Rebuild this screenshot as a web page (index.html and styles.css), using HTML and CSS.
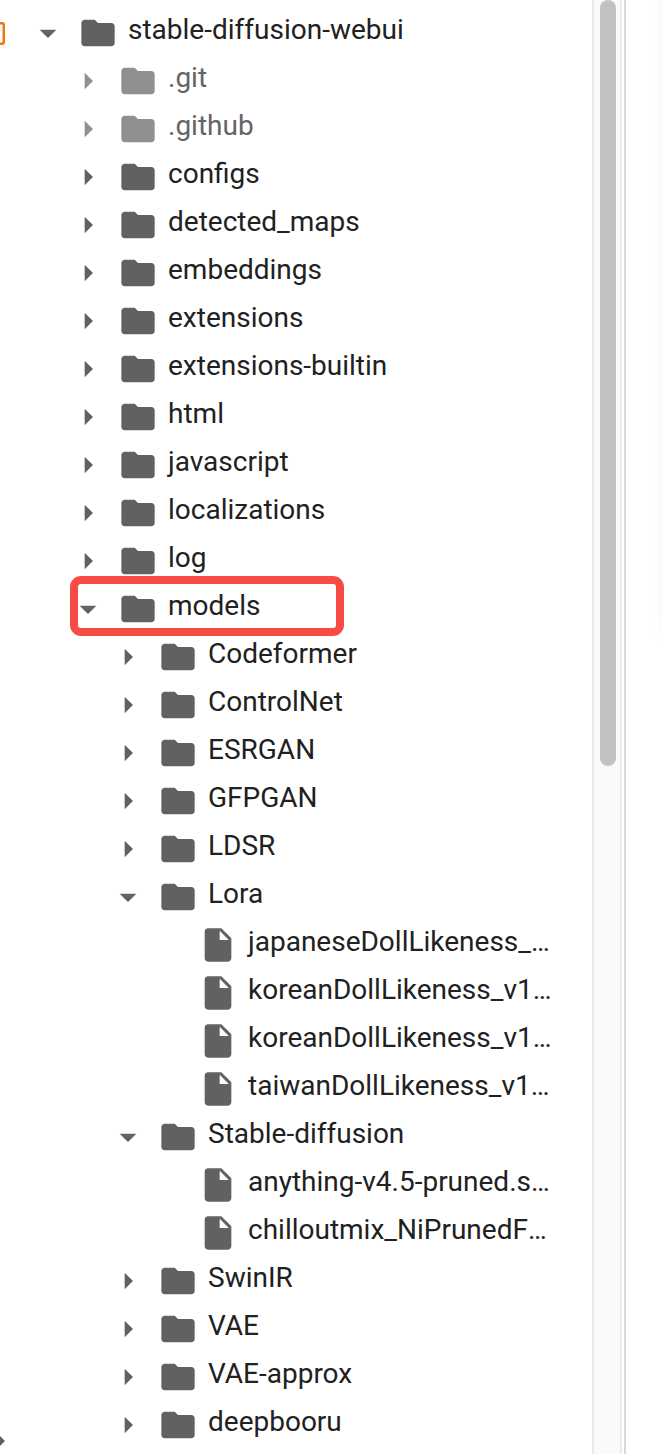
FILE: index.html
```
<!DOCTYPE html>
<html lang="en">
<head>
<meta charset="utf-8">
<title>Files</title>
<link rel="stylesheet" href="styles.css">
</head>
<body>
<svg class="sprite" aria-hidden="true">
  <symbol id="folder" viewBox="0 0 24 24"><path d="M10 4H4c-1.100 0-1.990.9-1.990 2L2 18c0 1.100.9 2 2 2h16c1.100 0 2-.9 2-2V8c0-1.100-.9-2-2-2h-8l-2-2z"/></symbol>
  <symbol id="file" viewBox="0 0 24 24"><path d="M6 2c-1.100 0-1.990.9-1.990 2L4 20c0 1.100.89 2 1.990 2H18c1.100 0 2-.9 2-2V8l-6-6H6zm7 7V3.500L18.500 9H13z"/></symbol>
  <symbol id="right" viewBox="0 0 24 24"><path d="M10 17l5-5-5-5z"/></symbol>
  <symbol id="down" viewBox="0 0 24 24"><path d="M7 10l5 5 5-5z"/></symbol>
</svg>
<div class="app">
  <main class="tree">
    <div class="row l0"><svg class="icon"><use href="#down"/></svg><svg class="icon"><use href="#folder"/></svg><span class="name">stable-diffusion-webui</span></div>
    <div class="row l1 dim"><svg class="icon"><use href="#right"/></svg><svg class="icon"><use href="#folder"/></svg><span class="name">.git</span></div>
    <div class="row l1 dim"><svg class="icon"><use href="#right"/></svg><svg class="icon"><use href="#folder"/></svg><span class="name">.github</span></div>
    <div class="row l1"><svg class="icon"><use href="#right"/></svg><svg class="icon"><use href="#folder"/></svg><span class="name">configs</span></div>
    <div class="row l1"><svg class="icon"><use href="#right"/></svg><svg class="icon"><use href="#folder"/></svg><span class="name">detected_maps</span></div>
    <div class="row l1"><svg class="icon"><use href="#right"/></svg><svg class="icon"><use href="#folder"/></svg><span class="name">embeddings</span></div>
    <div class="row l1"><svg class="icon"><use href="#right"/></svg><svg class="icon"><use href="#folder"/></svg><span class="name">extensions</span></div>
    <div class="row l1"><svg class="icon"><use href="#right"/></svg><svg class="icon"><use href="#folder"/></svg><span class="name">extensions-builtin</span></div>
    <div class="row l1"><svg class="icon"><use href="#right"/></svg><svg class="icon"><use href="#folder"/></svg><span class="name">html</span></div>
    <div class="row l1"><svg class="icon"><use href="#right"/></svg><svg class="icon"><use href="#folder"/></svg><span class="name">javascript</span></div>
    <div class="row l1"><svg class="icon"><use href="#right"/></svg><svg class="icon"><use href="#folder"/></svg><span class="name">localizations</span></div>
    <div class="row l1"><svg class="icon"><use href="#right"/></svg><svg class="icon"><use href="#folder"/></svg><span class="name">log</span></div>
    <div class="row l1 marked"><svg class="icon"><use href="#down"/></svg><svg class="icon"><use href="#folder"/></svg><span class="name">models</span></div>
    <div class="row l2"><svg class="icon"><use href="#right"/></svg><svg class="icon"><use href="#folder"/></svg><span class="name">Codeformer</span></div>
    <div class="row l2"><svg class="icon"><use href="#right"/></svg><svg class="icon"><use href="#folder"/></svg><span class="name">ControlNet</span></div>
    <div class="row l2"><svg class="icon"><use href="#right"/></svg><svg class="icon"><use href="#folder"/></svg><span class="name">ESRGAN</span></div>
    <div class="row l2"><svg class="icon"><use href="#right"/></svg><svg class="icon"><use href="#folder"/></svg><span class="name">GFPGAN</span></div>
    <div class="row l2"><svg class="icon"><use href="#right"/></svg><svg class="icon"><use href="#folder"/></svg><span class="name">LDSR</span></div>
    <div class="row l2"><svg class="icon"><use href="#down"/></svg><svg class="icon"><use href="#folder"/></svg><span class="name">Lora</span></div>
    <div class="row l3"><svg class="icon"><use href="#file"/></svg><span class="name">japaneseDollLikeness_…</span></div>
    <div class="row l3"><svg class="icon"><use href="#file"/></svg><span class="name">koreanDollLikeness_v1…</span></div>
    <div class="row l3"><svg class="icon"><use href="#file"/></svg><span class="name">koreanDollLikeness_v1…</span></div>
    <div class="row l3"><svg class="icon"><use href="#file"/></svg><span class="name">taiwanDollLikeness_v1…</span></div>
    <div class="row l2"><svg class="icon"><use href="#down"/></svg><svg class="icon"><use href="#folder"/></svg><span class="name">Stable-diffusion</span></div>
    <div class="row l3"><svg class="icon"><use href="#file"/></svg><span class="name">anything-v4.5-pruned.s…</span></div>
    <div class="row l3"><svg class="icon"><use href="#file"/></svg><span class="name">chilloutmix_NiPrunedF<span class="more">…</span></span></div>
    <div class="row l2"><svg class="icon"><use href="#right"/></svg><svg class="icon"><use href="#folder"/></svg><span class="name">SwinIR</span></div>
    <div class="row l2"><svg class="icon"><use href="#right"/></svg><svg class="icon"><use href="#folder"/></svg><span class="name">VAE</span></div>
    <div class="row l2"><svg class="icon"><use href="#right"/></svg><svg class="icon"><use href="#folder"/></svg><span class="name">VAE-approx</span></div>
    <div class="row l2"><svg class="icon"><use href="#right"/></svg><svg class="icon"><use href="#folder"/></svg><span class="name">deepbooru</span></div>
  </main>
  <div class="scrollbar"><div class="thumb"></div></div>
  <div class="editor"><div class="shade"></div></div>
  <div class="rail-tab"></div>
  <svg class="rail-arrow" viewBox="0 0 5 10"><path d="M0 0l5 5-5 5z"/></svg>
</div>
</body>
</html>
```
FILE: styles.css
```
body {
  margin: 0;
  background: #fff;
  font-family: Roboto, "Liberation Sans", sans-serif;
}

.sprite {
  position: absolute;
  width: 0;
  height: 0;
}

.app {
  position: relative;
  display: flex;
  height: 1454px;
  overflow: hidden;
}

.tree {
  width: 592px;
  flex: none;
  box-sizing: border-box;
  padding-top: 9px;
}

.row {
  position: relative;
  display: flex;
  align-items: center;
  height: 48px;
  color: #212121;
}

.l0 { padding-left: 28px; }
.l1 { padding-left: 68px; }
.l2 { padding-left: 108px; }
.l3 { padding-left: 198px; }

.icon {
  width: 40px;
  height: 40px;
  flex: none;
  margin-right: 10px;
  fill: #616161;
}

.name {
  font-size: 28px;
  line-height: 32px;
  padding-bottom: 7px;
  white-space: nowrap;
}

.more { font-kerning: none; }

.dim .icon { fill: #909090; }
.dim .name { color: #646464; }

.marked::after {
  content: "";
  position: absolute;
  left: 70px;
  top: -9px;
  width: 274px;
  height: 60px;
  box-sizing: border-box;
  border: 8px solid #f84b46;
  border-radius: 11px;
}

.scrollbar {
  width: 34px;
  flex: none;
  box-sizing: border-box;
  border-right: 2px solid #d9d9d9;
  background: linear-gradient(to right, #e8e8e8 2px, #fafafa 2px 28px, #ececec 28px 30px, #fff 30px);
  padding-left: 8px;
}

.thumb {
  width: 16px;
  height: 766px;
  border-radius: 8px;
  background: #c1c1c1;
}

.editor {
  flex: 1;
  display: flex;
  justify-content: flex-end;
}

.shade {
  width: 8px;
  height: 650px;
  background: linear-gradient(to right, #fff, #f8f8f8);
  -webkit-mask-image: linear-gradient(#000 600px, transparent);
  mask-image: linear-gradient(#000 600px, transparent);
}

.rail-tab {
  position: absolute;
  left: -16px;
  top: 22px;
  width: 21px;
  height: 23px;
  box-shadow: inset 0 0 0 2.5px #ee770b;
  border-radius: 3px;
}

.rail-arrow {
  position: absolute;
  left: 0;
  top: 1436px;
  width: 5px;
  height: 10px;
  fill: #616161;
}
```
